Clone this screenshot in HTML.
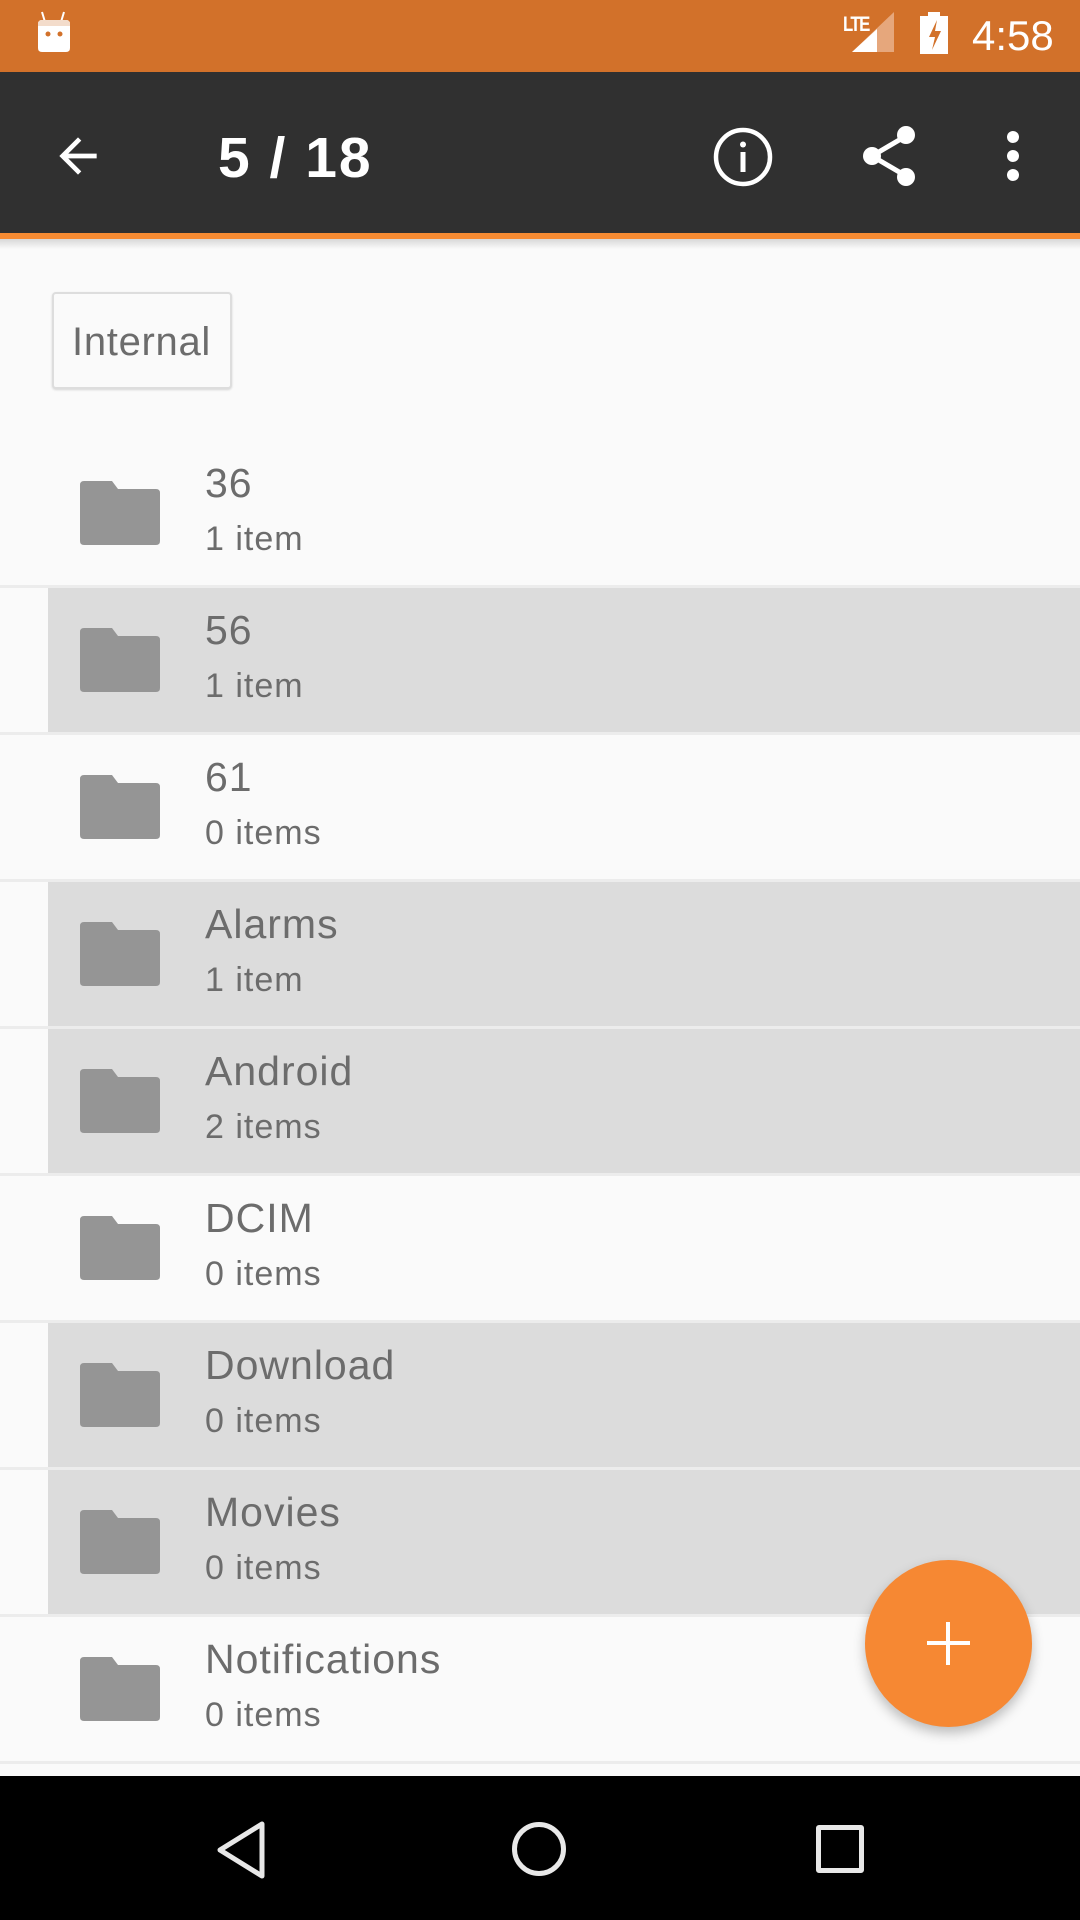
<!DOCTYPE html>
<html><head><meta charset="utf-8"><style>
*{margin:0;padding:0;box-sizing:border-box}
body{width:1080px;height:1920px;overflow:hidden;background:#fafafa;font-family:"Liberation Sans",sans-serif;position:relative}
.abs{position:absolute}
.row{position:absolute;left:0;width:1080px;height:144px}
.row.hl::before{content:"";position:absolute;left:48px;top:0;right:0;bottom:0;background:#dcdcdc}
.sep{position:absolute;left:0;width:1080px;height:3px;background:#ececec}
.t{position:absolute;left:205px;top:22px;font-size:41px;line-height:1;color:#6c6c6c;letter-spacing:1px}
.s{position:absolute;left:205px;top:81px;font-size:34px;line-height:1;color:#6c6c6c;letter-spacing:1px}
.f{position:absolute;left:80px;top:40px}
</style></head><body>
<div class="abs" style="left:0;top:0;width:1080px;height:72px;background:#d2712a"></div>
<svg class="abs" style="left:34px;top:10px" width="40" height="46" viewBox="0 0 40 46"><path d="M8 2l3 10M30 2l-3 10" stroke="#fff" stroke-width="2"/><path d="M4 14q0-4 4-4h24q4 0 4 4v24q0 4-4 4H8q-4 0-4-4z" fill="#fff"/><path d="M8 10h24q4 0 4 4v2H4v-2q0-4 4-4z" fill="#f3dccb"/><circle cx="14" cy="24" r="2.5" fill="#d2712a"/><circle cx="26" cy="24" r="2.5" fill="#d2712a"/></svg>
<div class="abs" style="left:843px;top:13px;font-size:21px;color:#fff;font-weight:bold;letter-spacing:-2px;transform:scaleX(.8);transform-origin:left">LTE</div>
<svg class="abs" style="left:852px;top:12px" width="46" height="40"><polygon points="0,40 42,0 42,40" fill="#e6a77c"/><polygon points="0,40 25,17 25,40" fill="#fff"/></svg>
<svg class="abs" style="left:920px;top:12px" width="30" height="42"><rect x="8" y="0" width="12" height="5" fill="#fff"/><rect x="0" y="4" width="28" height="38" fill="#fff"/><path d="M17 8l-8 17h6l-3 13 9-19h-6z" fill="#d2712a"/></svg>
<div class="abs" style="left:972px;top:15px;font-size:42px;line-height:1;color:#fff">4:58</div>

<div class="abs" style="left:0;top:72px;width:1080px;height:162px;background:#303030"></div>
<div class="abs" style="left:0;top:233px;width:1080px;height:6px;background:#f68b33"></div>
<div class="abs" style="left:0;top:239px;width:1080px;height:10px;background:linear-gradient(#d8d8d8,#fafafa)"></div>
<svg class="abs" style="left:50px;top:128px" width="56" height="56" viewBox="0 0 24 24"><path d="M20 11H7.83l5.59-5.59L12 4l-8 8 8 8 1.41-1.41L7.83 13H20v-2z" fill="#fff"/></svg>
<div class="abs" style="left:218px;top:130px;font-size:57px;line-height:1;color:#fff;font-weight:bold;letter-spacing:2px">5 / 18</div>
<svg class="abs" style="left:712px;top:126px" width="62" height="62" viewBox="0 0 62 62"><circle cx="31" cy="31" r="27" stroke="#fff" stroke-width="4.5" fill="none"/><rect x="28.5" y="26" width="5" height="20" fill="#fff"/><circle cx="31" cy="18.5" r="3" fill="#fff"/></svg>
<svg class="abs" style="left:856px;top:122px" width="68" height="68" viewBox="0 0 68 68"><path d="M16 34L50 14M16 34l34 20" stroke="#fff" stroke-width="5"/><circle cx="50" cy="13" r="9" fill="#fff"/><circle cx="16" cy="34" r="9" fill="#fff"/><circle cx="50" cy="55" r="9" fill="#fff"/></svg>
<svg class="abs" style="left:1000px;top:130px" width="26" height="52"><circle cx="13" cy="7" r="6" fill="#fff"/><circle cx="13" cy="26" r="6" fill="#fff"/><circle cx="13" cy="45" r="6" fill="#fff"/></svg>

<div class="abs" style="left:52px;top:292px;width:180px;height:97px;border:2px solid #ddd;border-radius:4px;background:#fafafa;box-shadow:0 1px 2px rgba(0,0,0,.15)"></div>
<div class="abs" style="left:72px;top:322px;font-size:40px;line-height:1;color:#6c6c6c;letter-spacing:.7px">Internal</div>

<svg width="0" height="0" style="position:absolute"><defs><symbol id="fd" viewBox="0 0 80 64"><path d="M4 0h28l6 8h38q4 0 4 4v48q0 4-4 4H4q-4 0-4-4V4q0-4 4-4z" fill="#959595"/></symbol></defs></svg>

<div class="row" style="top:441px"><svg class="f" width="80" height="64"><use href="#fd"/></svg><div class="t">36</div><div class="s">1 item</div></div>
<div class="sep" style="top:585px"></div>
<div class="row hl" style="top:588px"><svg class="f" width="80" height="64"><use href="#fd"/></svg><div class="t">56</div><div class="s">1 item</div></div>
<div class="sep" style="top:732px"></div>
<div class="row" style="top:735px"><svg class="f" width="80" height="64"><use href="#fd"/></svg><div class="t">61</div><div class="s">0 items</div></div>
<div class="sep" style="top:879px"></div>
<div class="row hl" style="top:882px"><svg class="f" width="80" height="64"><use href="#fd"/></svg><div class="t">Alarms</div><div class="s">1 item</div></div>
<div class="sep" style="top:1026px"></div>
<div class="row hl" style="top:1029px"><svg class="f" width="80" height="64"><use href="#fd"/></svg><div class="t">Android</div><div class="s">2 items</div></div>
<div class="sep" style="top:1173px"></div>
<div class="row" style="top:1176px"><svg class="f" width="80" height="64"><use href="#fd"/></svg><div class="t">DCIM</div><div class="s">0 items</div></div>
<div class="sep" style="top:1320px"></div>
<div class="row hl" style="top:1323px"><svg class="f" width="80" height="64"><use href="#fd"/></svg><div class="t">Download</div><div class="s">0 items</div></div>
<div class="sep" style="top:1467px"></div>
<div class="row hl" style="top:1470px"><svg class="f" width="80" height="64"><use href="#fd"/></svg><div class="t">Movies</div><div class="s">0 items</div></div>
<div class="sep" style="top:1614px"></div>
<div class="row" style="top:1617px"><svg class="f" width="80" height="64"><use href="#fd"/></svg><div class="t">Notifications</div><div class="s">0 items</div></div>
<div class="sep" style="top:1761px"></div>

<div class="abs" style="left:865px;top:1560px;width:167px;height:167px;border-radius:50%;background:#f68833;box-shadow:0 6px 12px rgba(0,0,0,.25)"></div>
<div class="abs" style="left:927px;top:1641px;width:43px;height:4px;background:#fff"></div>
<div class="abs" style="left:946px;top:1622px;width:4px;height:43px;background:#fff"></div>

<div class="abs" style="left:0;top:1776px;width:1080px;height:144px;background:#000"></div>
<svg class="abs" style="left:212px;top:1820px" width="56" height="60"><path d="M50 4L8 30l42 26z" stroke="#e8e8e8" stroke-width="5" fill="none" stroke-linejoin="round"/></svg>
<div class="abs" style="left:512px;top:1822px;width:54px;height:54px;border:5px solid #e8e8e8;border-radius:50%"></div>
<div class="abs" style="left:816px;top:1825px;width:48px;height:48px;border:5px solid #e8e8e8;border-radius:3px"></div>
</body></html>
